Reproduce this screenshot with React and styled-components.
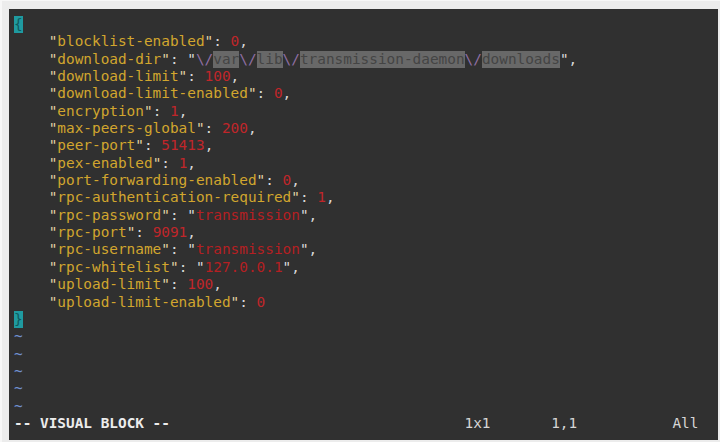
import React from "react";
import styled, { createGlobalStyle } from "styled-components";

const Global = createGlobalStyle`
  html, body { margin: 0; padding: 0; background: #ececec; }
  body { width: 720px; height: 442px; overflow: hidden; }
`;

const Frame = styled.div`
  box-sizing: border-box;
  width: 720px;
  height: 442px;
  padding: 8px 2px 2px 7px;
  background: #ececec;
  border-left: 2px solid #f7f7f7;
  border-top: 1px solid #f7f7f7;
`;

const Screen = styled.div`
  box-sizing: border-box;
  height: 100%;
  background: #303030;
  padding: 7px 0 0 5px;
  font-family: "DejaVu Sans Mono", monospace;
  font-size: 14.4px;
  line-height: 17.35px;
  color: #dcdcdc;
  white-space: pre;
`;

const Line = styled.div`
  height: 17.35px;
  display: flex;
  padding-left: ${(p) => (p.$indent ? "4ch" : "0")};
`;

const KeyQuote = styled.span`
  color: #e3d5a5;
`;
const Key = styled.span`
  color: #d2a62e;
`;
const Punct = styled.span`
  color: #d8d8d8;
`;
const Num = styled.span`
  color: #c0262a;
`;
const StrQuote = styled.span`
  color: #dedede;
`;
const Str = styled.span`
  color: #b51f22;
`;
const Esc = styled.span`
  color: #8f6ea3;
`;
const Hl = styled.span`
  background: #686868;
  color: #444444;
`;
const Cursor = styled.span`
  display: inline-block;
  width: 1ch;
  height: 17px;
  background: #1f9aa0;
  color: #0f5a5e;
`;
const Tilde = styled.div`
  height: 17.35px;
  color: #7090d0;
`;
const Status = styled.div`
  display: flex;
  height: 17.35px;
  color: #e6e6e6;
`;
const StatusCell = styled.span`
  width: ${(p) => p.$w || "auto"};
  color: ${(p) => (p.$dim ? "#d6d6d6" : "#ececec")};
  font-weight: ${(p) => (p.$dim ? "normal" : "bold")};
`;

const entries = [
  ["blocklist-enabled", { num: "0" }],
  ["download-dir", { path: true }],
  ["download-limit", { num: "100" }],
  ["download-limit-enabled", { num: "0" }],
  ["encryption", { num: "1" }],
  ["max-peers-global", { num: "200" }],
  ["peer-port", { num: "51413" }],
  ["pex-enabled", { num: "1" }],
  ["port-forwarding-enabled", { num: "0" }],
  ["rpc-authentication-required", { num: "1" }],
  ["rpc-password", { str: "transmission" }],
  ["rpc-port", { num: "9091" }],
  ["rpc-username", { str: "transmission" }],
  ["rpc-whitelist", { str: "127.0.0.1" }],
  ["upload-limit", { num: "100" }],
  ["upload-limit-enabled", { num: "0" }],
];

const pathParts = ["var", "lib", "transmission-daemon", "downloads"];

function Value({ v }) {
  if (v.num) return <Num>{v.num}</Num>;
  if (v.str)
    return (
      <>
        <StrQuote>"</StrQuote>
        <Str>{v.str}</Str>
        <StrQuote>"</StrQuote>
      </>
    );
  return (
    <>
      <StrQuote>"</StrQuote>
      {pathParts.map((p) => (
        <React.Fragment key={p}>
          <Esc>\/</Esc>
          <Hl>{p}</Hl>
        </React.Fragment>
      ))}
      <StrQuote>"</StrQuote>
    </>
  );
}

export default function App() {
  return (
    <>
      <Global />
      <Frame>
        <Screen>
          <Line>
            <Cursor>{"{"}</Cursor>
          </Line>
          {entries.map(([k, v], i) => (
            <Line key={k} $indent>
              <KeyQuote>"</KeyQuote>
              <Key>{k}</Key>
              <KeyQuote>"</KeyQuote>
              <Punct>: </Punct>
              <Value v={v} />
              {i < entries.length - 1 && <Punct>,</Punct>}
            </Line>
          ))}
          <Line>
            <Cursor>{"}"}</Cursor>
          </Line>
          {[0, 1, 2, 3, 4].map((n) => (
            <Tilde key={n}>~</Tilde>
          ))}
          <Status>
            <StatusCell $w="52ch">-- VISUAL BLOCK --</StatusCell>
            <StatusCell $w="10ch" $dim>1x1</StatusCell>
            <StatusCell $w="14ch" $dim>1,1</StatusCell>
            <StatusCell $dim>All</StatusCell>
          </Status>
        </Screen>
      </Frame>
    </>
  );
}
